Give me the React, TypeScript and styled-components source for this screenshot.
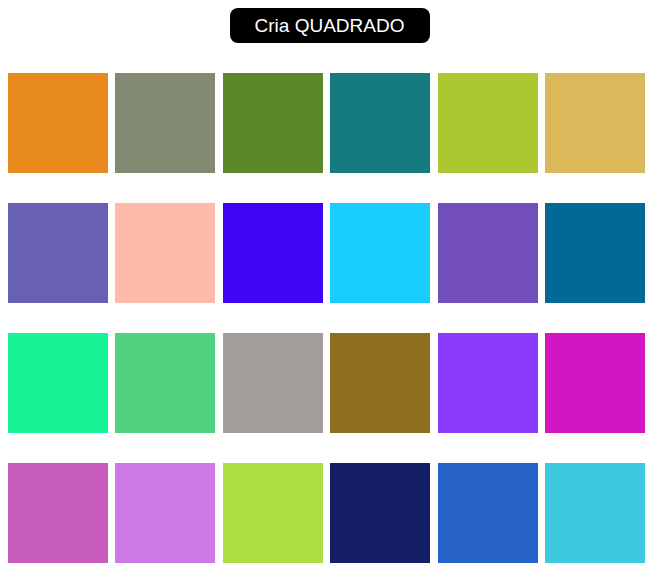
import React, { FC } from 'react';
import styled, { createGlobalStyle } from 'styled-components';

const GlobalStyle = createGlobalStyle`
	body {
		margin: 8px;
		background: #fff;
		font-family: "Liberation Sans", Arial, sans-serif;
	}
`;

const Page = styled.div`
	display: flex;
	flex-direction: column;
	align-items: center;
	gap: 30px;
`;

const CreateButton = styled.button`
	width: 200px;
	height: 35px;
	margin-left: 2px;
	padding: 0;
	border: none;
	border-radius: 8px;
	background: #000;
	color: #fff;
	font-family: "Liberation Sans", Arial, sans-serif;
	font-size: 19px;
	cursor: pointer;
`;

const Grid = styled.div`
	align-self: stretch;
	display: flex;
	flex-wrap: wrap;
	column-gap: 7.4px;
	row-gap: 30px;
`;

const Square = styled.div<{ $color: string }>`
	width: 100px;
	height: 100px;
	background: ${(p) => p.$color};
`;

const colors = [
	'#E98A1F', '#828A74', '#5C882C', '#147C7E', '#ABC832', '#DBB85A',
	'#6860B2', '#FEBBA9', '#4004F5', '#19CEFE', '#7350B9', '#026994',
	'#17F395', '#50D27E', '#A29E9B', '#8D6F1E', '#8A3AFA', '#D216C1',
	'#C85DBE', '#CD79E8', '#ADDE43', '#151F66', '#2863C9', '#3DCAE0',
];

const App: FC = () => (
	<>
		<GlobalStyle />
		<Page>
			<CreateButton>Cria QUADRADO</CreateButton>
			<Grid>
				{colors.map((c, i) => (
					<Square key={i} $color={c} />
				))}
			</Grid>
		</Page>
	</>
);

export default App;
